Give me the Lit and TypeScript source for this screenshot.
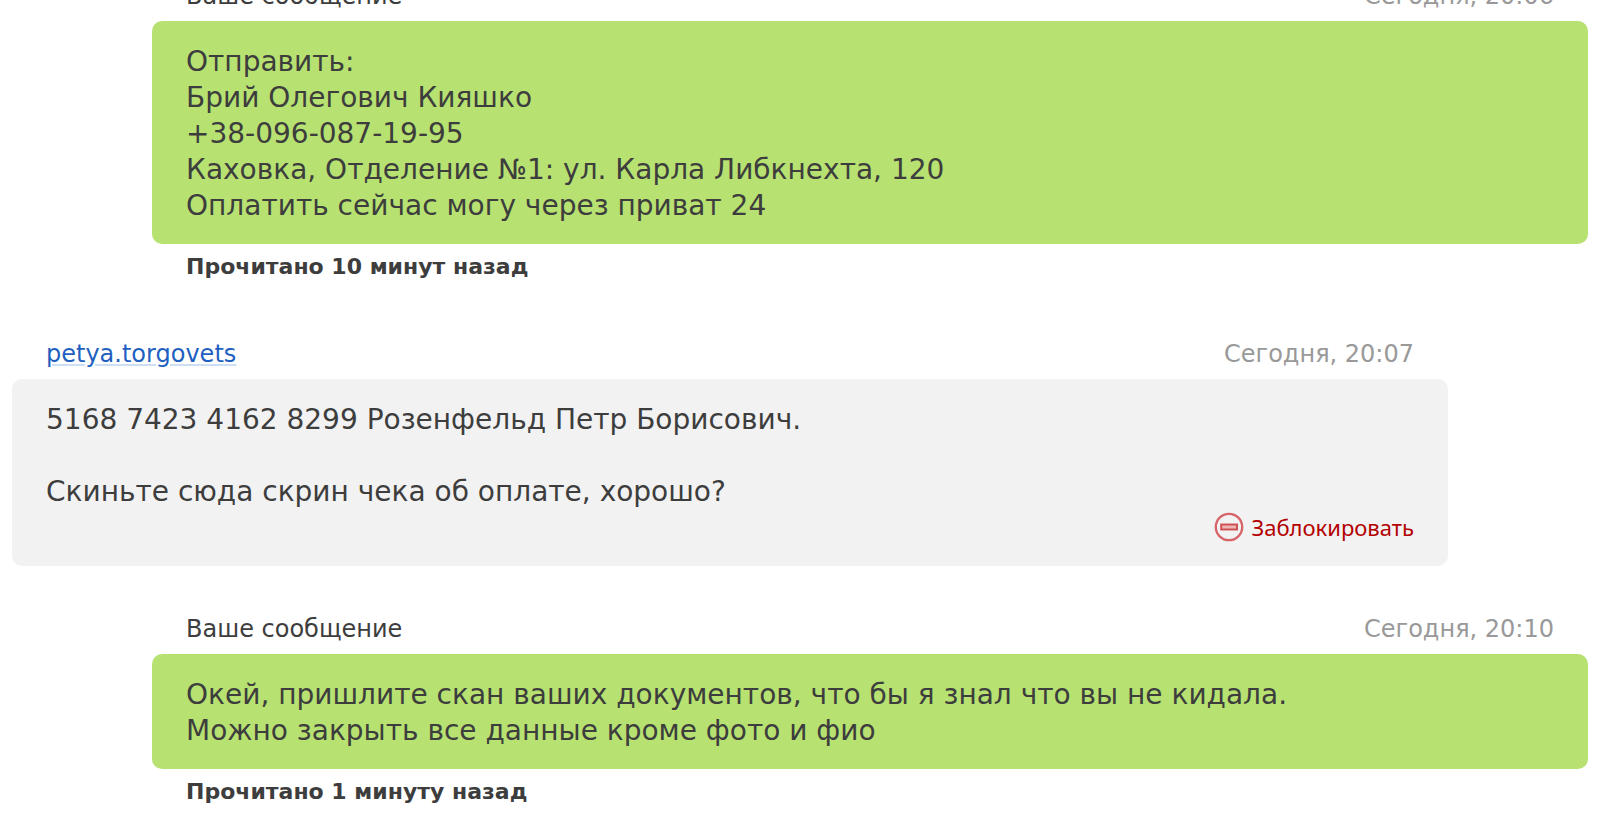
import { LitElement, html, css } from "lit";
import { customElement, property } from "lit/decorators.js";

interface Message {
  own: boolean;
  author: string;
  time: string;
  text: string;
  read?: string;
}

const messages: Message[] = [
  {
    own: true,
    author: "Ваше сообщение",
    time: "Сегодня, 20:06",
    text: "Отправить:\nБрий Олегович Кияшко\n+38-096-087-19-95\nКаховка, Отделение №1: ул. Карла Либкнехта, 120\nОплатить сейчас могу через приват 24",
    read: "Прочитано 10 минут назад",
  },
  {
    own: false,
    author: "petya.torgovets",
    time: "Сегодня, 20:07",
    text: "5168 7423 4162 8299 Розенфельд Петр Борисович.\n\nСкиньте сюда скрин чека об оплате, хорошо?",
  },
  {
    own: true,
    author: "Ваше сообщение",
    time: "Сегодня, 20:10",
    text: "Окей, пришлите скан ваших документов, что бы я знал что вы не кидала.\nМожно закрыть все данные кроме фото и фио",
    read: "Прочитано 1 минуту назад",
  },
];

const blockIcon = html`<svg width="30" height="30" viewBox="0 0 30 30" fill="none" aria-hidden="true">
  <circle cx="15" cy="15" r="13.2" stroke="#d76468" stroke-width="2.3" />
  <rect x="7.2" y="12.5" width="15.8" height="5" fill="#ecb4b5" stroke="#cf4d51" stroke-width="1.9" />
</svg>`;

@customElement("chat-message")
class ChatMessage extends LitElement {
  @property({ attribute: false }) message!: Message;

  static styles = css`
    :host {
      display: block;
    }
    .message {
      margin-right: 140px;
    }
    .own {
      margin-left: 140px;
      margin-right: 0;
    }
    .head {
      display: flex;
      justify-content: space-between;
      padding: 0 34px 8px;
      font-size: 24px;
      line-height: 34px;
    }
    .time {
      color: #999;
    }
    .author {
      color: #1f5fbf;
      text-decoration: underline;
      text-decoration-color: #cfdff3;
      text-decoration-thickness: 2px;
      text-underline-offset: 2px;
    }
    .bubble {
      padding: 23px 34px 20px;
      border-radius: 10px;
      background: #f2f2f2;
      font-size: 28px;
      line-height: 36px;
    }
    .own .bubble {
      background: #b7e271;
    }
    .text {
      margin: 0;
      white-space: pre-line;
    }
    .actions {
      display: flex;
      justify-content: flex-end;
      padding-bottom: 2px;
    }
    .block {
      display: flex;
      align-items: center;
      gap: 8px;
      padding: 0;
      border: 0;
      background: none;
      color: #b30000;
      font-family: Tahoma, "Noto Sans", sans-serif;
      font-size: 22px;
      line-height: 34px;
      cursor: pointer;
    }
    .read {
      margin: 7px 34px 8px;
      font-size: 22px;
      font-weight: bold;
      line-height: 32px;
    }
  `;

  render() {
    const m = this.message;
    return html`<article class="message ${m.own ? "own" : ""}">
      <header class="head">
        ${m.own ? html`<span>${m.author}</span>` : html`<a class="author" href="#">${m.author}</a>`}
        <time class="time">${m.time}</time>
      </header>
      <div class="bubble">
        <p class="text">${m.text}</p>
        ${m.own
          ? ""
          : html`<div class="actions">
              <button class="block" type="button">${blockIcon}<span>Заблокировать</span></button>
            </div>`}
      </div>
      ${m.read ? html`<p class="read">${m.read}</p>` : ""}
    </article>`;
  }
}

@customElement("app-root")
class AppRoot extends LitElement {
  static styles = css`
    :host {
      display: flow-root;
      height: 100vh;
      overflow: hidden;
      background: #fff;
      color: #3d3d3d;
      font-family: Verdana, "DejaVu Sans", sans-serif;
    }
    /* The thread is scrolled: its first heading is partly above the window. */
    .thread {
      display: flex;
      flex-direction: column;
      gap: 46px;
      margin-top: -21px;
      padding: 0 12px;
    }
  `;

  render() {
    return html`<main class="thread">
      ${messages.map((m) => html`<chat-message .message=${m}></chat-message>`)}
    </main>`;
  }
}
